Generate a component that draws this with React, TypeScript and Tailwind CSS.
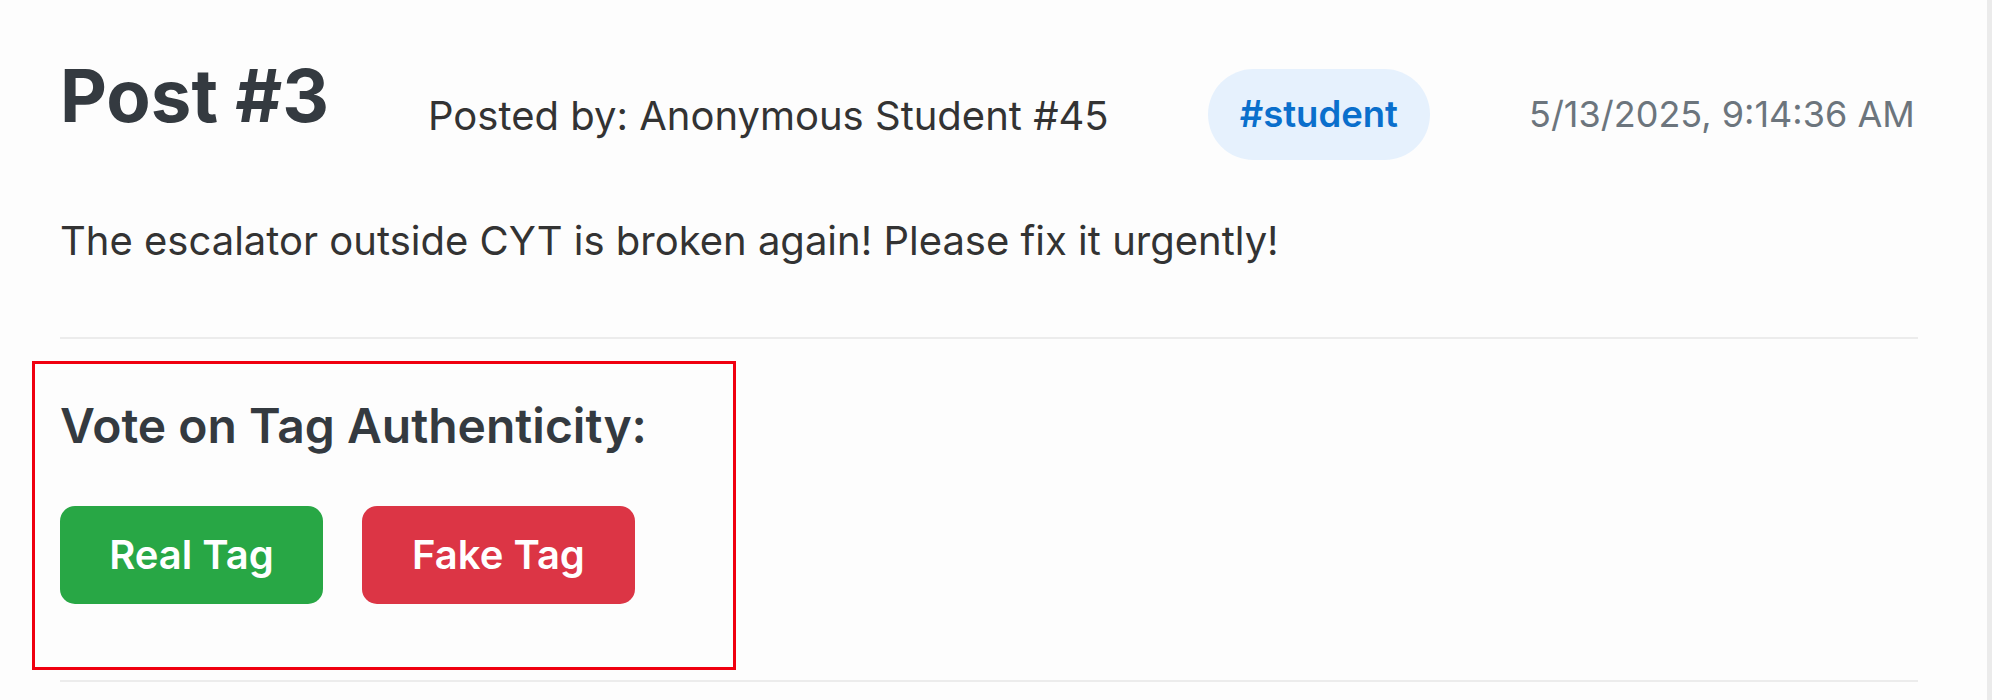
const post = {
  id: 3,
  author: "Anonymous Student #45",
  tag: "student",
  createdAt: "5/13/2025, 9:14:36 AM",
  body: "The escalator outside CYT is broken again! Please fix it urgently!",
};

function VoteSection() {
  return (
    <div className="-ml-[28px] mt-[22px] w-[704px] border-[3px] border-[#f00010] pl-[25px] pt-[33px] pb-[63px]">
      <h3 className="text-[48px] font-semibold leading-[57px] text-[#343a40]">
        Vote on Tag Authenticity:
      </h3>
      <div className="mt-[52px] flex items-center gap-[39px]">
        <button className="h-[98px] w-[263px] rounded-[15px] bg-[#28a745] text-[40px] font-semibold text-white">
          Real Tag
        </button>
        <button className="h-[98px] w-[273px] rounded-[15px] bg-[#dc3545] text-[40px] font-semibold text-white">
          Fake Tag
        </button>
      </div>
    </div>
  );
}

export default function App() {
  return (
    <div
      className="flex h-[700px] w-full overflow-hidden bg-[#ebebeb]"
      style={{ fontFamily: "Inter, 'Noto Sans', sans-serif" }}
    >
      <div className="h-full w-[1987px] shrink-0 bg-[#fdfdfd] pl-[60px] pr-[69px] pt-[52px]">
        <div className="flex items-center gap-[99px] whitespace-nowrap">
          <h2 className="mb-[38px] shrink-0 text-[72.5px] font-bold leading-[87px] text-[#343a40]">
            Post #{post.id}
          </h2>
          <span className="mt-[2px] shrink-0 text-[40px] leading-[48px] text-[#333333]">
            Posted by: {post.author}
          </span>
          <span className="flex h-[91px] shrink-0 items-center rounded-full bg-[#e6f1fd] px-[32px] text-[36.5px] font-semibold text-[#0a6fcc]">
            #{post.tag}
          </span>
          <span className="shrink-0 text-[36px] leading-[45px] text-[#6c757d]">
            {post.createdAt}
          </span>
        </div>

        <p className="mt-[40px] text-[40px] leading-[48px] text-[#333333]">
          {post.body}
        </p>

        <div className="mt-[72px] h-[2px] w-full bg-[#ececec]" />

        <VoteSection />

        <div className="mt-[10px] h-[2px] w-full bg-[#ececec]" />
      </div>
    </div>
  );
}
